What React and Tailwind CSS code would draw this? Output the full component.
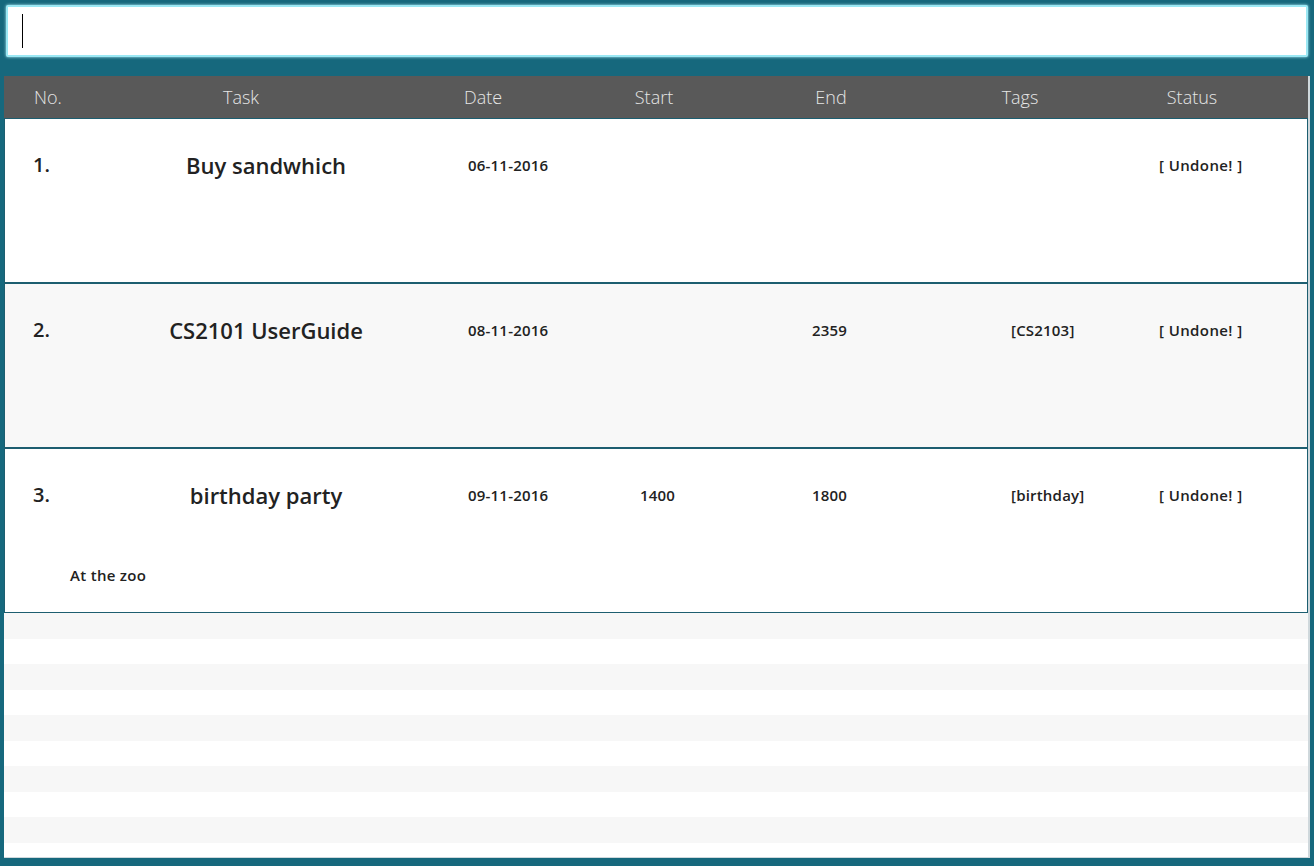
import React from 'react';

const tasks = [
  { no: '1.', name: 'Buy sandwhich', date: '06-11-2016', start: '', end: '', tags: '', status: '[ Undone! ]', desc: '' },
  { no: '2.', name: 'CS2101 UserGuide', date: '08-11-2016', start: '', end: '2359', tags: '[CS2103]', status: '[ Undone! ]', desc: '' },
  { no: '3.', name: 'birthday party', date: '09-11-2016', start: '1400', end: '1800', tags: '[birthday]', status: '[ Undone! ]', desc: 'At the zoo' },
];

const font = { fontFamily: '"Open Sans", "Noto Sans", sans-serif' };

function Header() {
  return (
    <div className="flex h-[42px] items-center bg-[#595959] text-[18px] font-light text-[#e6e6e6]" style={font}>
      <div className="w-[88px] text-center">No.</div>
      <div className="w-[298px] text-center">Task</div>
      <div className="w-[186px] text-center">Date</div>
      <div className="w-[156px] text-center">Start</div>
      <div className="w-[198px] text-center">End</div>
      <div className="w-[180px] text-center">Tags</div>
      <div className="w-[164px] text-center">Status</div>
    </div>
  );
}

function TaskRow({ task, shaded }) {
  return (
    <div
      className={`h-[165px] border border-[#1d5e70] pt-[34px] text-[#222] ${shaded ? 'bg-[#f8f8f8]' : 'bg-white'}`}
      style={font}
    >
      <div className="flex h-[24px] items-center pl-[28px]">
        <div className="w-[60px] text-[20px] font-semibold">{task.no}</div>
        <div className="w-[346px] text-center text-[22px] font-semibold">{task.name}</div>
        <div className="w-[172px] pl-[29px] text-[15px] font-semibold tracking-[0.2px]">{task.date}</div>
        <div className="w-[172px] pl-[29px] text-[15px] font-semibold tracking-[0.2px]">{task.start}</div>
        <div className="w-[200px] pl-[29px] text-[15px] font-semibold tracking-[0.2px]">{task.end}</div>
        <div className="w-[147px] pl-[28px] text-[15px] font-semibold tracking-[0.2px]">{task.tags}</div>
        <div className="pl-[29px] text-[15px] font-semibold tracking-[0.4px]">{task.status}</div>
      </div>
      {task.desc && (
        <div className="mt-[58px] h-[20px] pl-[65px] text-[15px] font-semibold leading-[20px] tracking-[0.3px]">{task.desc}</div>
      )}
    </div>
  );
}

export default function App() {
  const stripes = Array.from({ length: 10 });

  return (
    <div className="h-[866px] w-[1314px] overflow-hidden bg-[#16687d]">
      {/* Command box */}
      <div className="px-[6px] pt-[5px]">
        <div className="flex h-[52px] items-center rounded-[2px] border-2 border-[#9be8f4] bg-white pl-[14px] shadow-[0_0_3px_#bff4fb]">
          <div className="h-[34px] w-px bg-black" />
        </div>
      </div>

      {/* Task table */}
      <div className="mx-[4px] mt-[19px] h-[782px] overflow-hidden border-r-2 border-b border-[#cfd8dc] bg-white">
        <Header />
        {tasks.map((t, i) => (
          <TaskRow key={t.no} task={t} shaded={i % 2 === 1} />
        ))}
        {stripes.map((_, i) => (
          <div key={i} className={`h-[25.5px] ${i % 2 === 0 ? 'bg-[#f7f7f7]' : 'bg-white'}`} />
        ))}
      </div>
    </div>
  );
}
